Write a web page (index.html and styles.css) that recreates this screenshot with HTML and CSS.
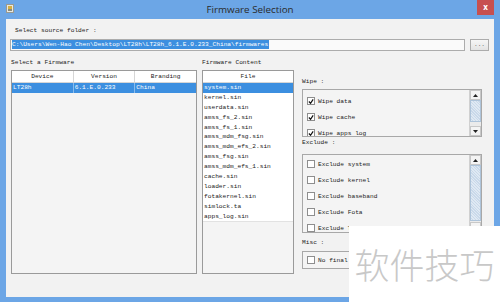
FILE: index.html
```html
<!DOCTYPE html>
<html>
<head>
<meta charset="utf-8">
<link rel="stylesheet" href="styles.css">
</head>
<body>
<div class="window">
  <div class="titlebar">
    <div class="tb-left">
      <svg class="app-icon" width="8" height="9" viewBox="0 0 8 9">
        <rect x="0.5" y="0.5" width="7" height="8" fill="#e8e8e0" stroke="#9a9a90"/>
        <rect x="2" y="2" width="4" height="3" fill="#d8b040"/>
        <rect x="2" y="5" width="4" height="2" fill="#8a8a7a"/>
      </svg>
    </div>
    <div class="title">Firmware Selection</div>
    <div class="tb-right"><div class="close">x</div></div>
  </div>
  <div class="client">
    <div class="lbl src-lbl">Select source folder :</div>
    <div class="path-row">
      <div class="field"><span class="sel">C:\Users\Wen-Hao Chen\Desktop\LT28h\LT28h_6.1.E.0.233_China\firmwares</span></div>
      <div class="btn">...</div>
    </div>
    <div class="main">
      <div class="col col1">
        <div class="lbl">Select a Firmware</div>
        <div class="table">
          <div class="thead">
            <div class="th">Device</div>
            <div class="th">Version</div>
            <div class="th last">Branding</div>
          </div>
          <div class="tr selected">
            <div class="td">LT28h</div>
            <div class="td">6.1.E.0.233</div>
            <div class="td last">China</div>
          </div>
        </div>
      </div>
      <div class="col col2">
        <div class="lbl">Firmware Content</div>
        <div class="table files">
          <div class="thead"><div class="th last">File</div></div>
          <div class="rows">
            <div class="fr selected">system.sin</div>
            <div class="fr">kernel.sin</div>
            <div class="fr">userdata.sin</div>
            <div class="fr">amss_fs_2.sin</div>
            <div class="fr">amss_fs_1.sin</div>
            <div class="fr">amss_mdm_fsg.sin</div>
            <div class="fr">amss_mdm_efs_2.sin</div>
            <div class="fr">amss_fsg.sin</div>
            <div class="fr">amss_mdm_efs_1.sin</div>
            <div class="fr">cache.sin</div>
            <div class="fr">loader.sin</div>
            <div class="fr">fotakernel.sin</div>
            <div class="fr">simlock.ta</div>
            <div class="fr">apps_log.sin</div>
          </div>
        </div>
      </div>
      <div class="col col3">
        <div class="lbl wipe-lbl">Wipe :</div>
        <div class="box wipe-box">
          <div class="items">
            <div class="item"><span class="cb on"><svg width="7" height="7" viewBox="0 0 7 7"><path d="M1 3.5 L3 5.5 L6 1" fill="none" stroke="#111" stroke-width="1.4"/></svg></span>Wipe data</div>
            <div class="item"><span class="cb on"><svg width="7" height="7" viewBox="0 0 7 7"><path d="M1 3.5 L3 5.5 L6 1" fill="none" stroke="#111" stroke-width="1.4"/></svg></span>Wipe cache</div>
            <div class="item"><span class="cb on"><svg width="7" height="7" viewBox="0 0 7 7"><path d="M1 3.5 L3 5.5 L6 1" fill="none" stroke="#111" stroke-width="1.4"/></svg></span>Wipe apps log</div>
          </div>
          <div class="sbar">
            <div class="sb-btn"><svg width="5" height="3" viewBox="0 0 5 3"><path d="M0 3 L2.5 0 L5 3Z" fill="#222"/></svg></div>
            <div class="sb-thumb wipe-thumb"></div>
            <div class="sb-track"></div>
            <div class="sb-btn"><svg width="5" height="3" viewBox="0 0 5 3"><path d="M0 0 L2.5 3 L5 0Z" fill="#222"/></svg></div>
          </div>
        </div>
        <div class="lbl ex-lbl">Exclude :</div>
        <div class="box ex-box">
          <div class="items">
            <div class="item"><span class="cb"></span>Exclude system</div>
            <div class="item"><span class="cb"></span>Exclude kernel</div>
            <div class="item"><span class="cb"></span>Exclude baseband</div>
            <div class="item"><span class="cb"></span>Exclude Fota</div>
            <div class="item"><span class="cb"></span>Exclude TA</div>
          </div>
          <div class="sbar">
            <div class="sb-btn"><svg width="5" height="3" viewBox="0 0 5 3"><path d="M0 3 L2.5 0 L5 3Z" fill="#222"/></svg></div>
            <div class="sb-thumb ex-thumb"></div>
            <div class="sb-track"></div>
            <div class="sb-btn"><svg width="5" height="3" viewBox="0 0 5 3"><path d="M0 0 L2.5 3 L5 0Z" fill="#222"/></svg></div>
          </div>
        </div>
        <div class="lbl misc-lbl">Misc :</div>
        <div class="box misc-box">
          <div class="item"><span class="cb"></span>No final</div>
        </div>
      </div>
    </div>
  </div>
</div>
<div class="watermark">软件技巧</div>
</body>
</html>
```

FILE: styles.css
```css
html, body {
  margin: 0;
  padding: 0;
}
body {
  width: 500px;
  height: 302px;
  overflow: hidden;
  position: relative;
  background: #6ca6e6;
}
.window {
  width: 500px;
  height: 302px;
  display: flex;
  flex-direction: column;
}
.titlebar {
  height: 19px;
  display: grid;
  grid-template-columns: 1fr auto 1fr;
  align-items: start;
}
.tb-left {
  padding: 4px 0 0 6px;
  display: flex;
}
.title {
  font-family: "Open Sans", "Noto Sans", sans-serif;
  font-size: 9.8px;
  line-height: 19px;
  color: #2a2a2a;
}
.tb-right {
  display: flex;
  justify-content: flex-end;
  padding-right: 6px;
}
.close {
  width: 17px;
  height: 15px;
  background: #c75050;
  color: #fff;
  font-family: "Noto Sans", sans-serif;
  font-size: 8px;
  font-weight: bold;
  line-height: 14px;
  text-align: center;
}
.client {
  margin: 0 6px;
  height: 278px;
  background: #f2f2f2;
  padding: 0 5px 0 4px;
  display: flex;
  flex-direction: column;
  font-family: "Liberation Mono", "DejaVu Sans Mono", monospace;
  font-size: 6.2px;
  color: #222;
}
.lbl {
  height: 8px;
  line-height: 8px;
  white-space: nowrap;
}
.src-lbl {
  margin-top: 8px;
  padding-left: 5px;
}
.path-row {
  margin-top: 4px;
  display: flex;
  gap: 5px;
  height: 12px;
}
.field {
  flex: 1;
  background: #fafafa;
  border: 1px solid #acacac;
  padding-left: 1px;
  line-height: 10px;
  overflow: hidden;
  white-space: nowrap;
}
.sel {
  background: #3c8fe0;
  color: #fff;
  display: inline-block;
  line-height: 9px;
  padding-right: 1px;
}
.btn {
  width: 17px;
  border: 1px solid #acacac;
  background: linear-gradient(#f6f6f6, #e3e3e3);
  color: #555;
  text-align: center;
  line-height: 9px;
}
.main {
  margin-top: 8px;
  display: grid;
  grid-template-columns: 186px 92px 183px;
  column-gap: 5px;
  padding-left: 1px;
}
.col {
  display: flex;
  flex-direction: column;
}
.col3 {
  margin-left: 3px;
}
.table {
  margin-top: 3px;
  height: 204px;
  border: 1px solid #9a9a9a;
  box-sizing: border-box;
  background: #f4f4f4;
  display: flex;
  flex-direction: column;
}
.thead {
  height: 12px;
  display: flex;
  background: #fff;
  border-bottom: 1px solid #d6d6d6;
  box-sizing: border-box;
}
.th {
  flex: 1;
  text-align: center;
  line-height: 11px;
  border-right: 1px solid #d6d6d6;
}
.th.last, .td.last {
  border-right: none;
}
.tr {
  height: 10px;
  display: flex;
}
.td {
  flex: 1;
  padding-left: 1px;
  line-height: 10px;
  border-right: 1px solid #8bbcec;
}
.selected {
  background: #3c8fe0;
  color: #fff;
}
.rows {
  background: #fff;
}
.fr {
  height: 9.9px;
  line-height: 9.9px;
  padding-left: 1px;
  white-space: nowrap;
}
.fr:last-child {
  border-bottom: 1px solid #e2e2e2;
}
.wipe-lbl {
  margin-top: 19px;
}
.box {
  border: 1px solid #a8a8a8;
  box-sizing: border-box;
  background: #f4f4f4;
  display: flex;
  overflow: hidden;
}
.wipe-box {
  margin-top: 3px;
  height: 48px;
}
.ex-lbl {
  margin-top: 2px;
}
.ex-box {
  margin-top: 7px;
  height: 79px;
}
.misc-lbl {
  margin-top: 6px;
}
.misc-box {
  margin-top: 4px;
  height: 18px;
  align-items: center;
}
.items {
  flex: 1;
  display: flex;
  flex-direction: column;
}
.wipe-box .items {
  padding-top: 3px;
}
.ex-box .items {
  padding-top: 1px;
}
.item {
  height: 16px;
  flex-shrink: 0;
  display: flex;
  align-items: center;
  padding-left: 4px;
  white-space: nowrap;
}
.cb {
  width: 8px;
  height: 8px;
  box-sizing: border-box;
  border: 1px solid #8e8e8e;
  background: #fff;
  margin-right: 3px;
  display: flex;
  align-items: center;
  justify-content: center;
}
.sbar {
  width: 11px;
  border-left: 1px solid #d0d0d0;
  background: #ebebeb;
  display: flex;
  flex-direction: column;
}
.sb-btn {
  height: 10px;
  flex-shrink: 0;
  background: #f4f4f4;
  border: 1px solid #c8c8c8;
  box-sizing: border-box;
  display: flex;
  align-items: center;
  justify-content: center;
}
.sb-thumb {
  flex-shrink: 0;
  background: repeating-linear-gradient(45deg, #dfe9f3 0 1px, #c9d9ea 1px 2px);
  border: 1px solid #aec4da;
  box-sizing: border-box;
}
.wipe-thumb {
  height: 22px;
}
.ex-thumb {
  height: 56px;
}
.sb-track {
  flex: 1;
}
.watermark {
  position: absolute;
  left: 349px;
  top: 226px;
  right: 0;
  bottom: 0;
  background: #fff;
  color: #c8c8c8;
  font-family: "Noto Sans CJK SC", sans-serif;
  font-size: 35px;
  font-weight: 300;
  line-height: 76px;
  text-align: center;
  letter-spacing: 0;
  white-space: nowrap;
}
```
